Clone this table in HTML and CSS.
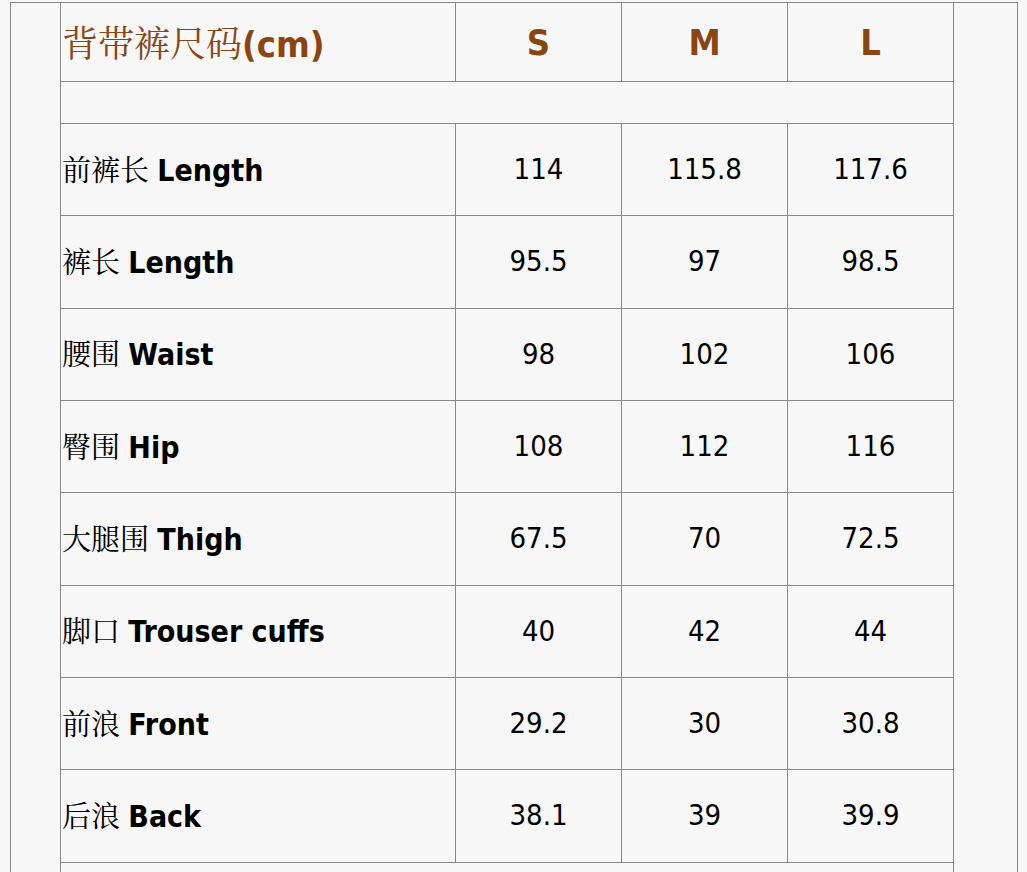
FILE: index.html
```html
<!DOCTYPE html>
<html lang="zh">
<head>
<meta charset="utf-8">
<title>背带裤尺码</title>
<link rel="stylesheet" href="styles.css">
</head>
<body>
<div class="frame">
  <table class="size-table">
    <colgroup>
      <col class="c-label">
      <col class="c-size">
      <col class="c-size">
      <col class="c-size">
    </colgroup>
    <tr class="head">
      <th class="label"><span class="cjk">背带裤尺码</span>(cm)</th>
      <th>S</th>
      <th>M</th>
      <th>L</th>
    </tr>
    <tr class="spacer"><td colspan="4"></td></tr>
    <tr class="row"><td class="label"><span class="cjk">前裤长</span> <b>Length</b></td><td>114</td><td>115.8</td><td>117.6</td></tr>
    <tr class="row"><td class="label"><span class="cjk">裤长</span> <b>Length</b></td><td>95.5</td><td>97</td><td>98.5</td></tr>
    <tr class="row"><td class="label"><span class="cjk">腰围</span> <b>Waist</b></td><td>98</td><td>102</td><td>106</td></tr>
    <tr class="row"><td class="label"><span class="cjk">臀围</span> <b>Hip</b></td><td>108</td><td>112</td><td>116</td></tr>
    <tr class="row"><td class="label"><span class="cjk">大腿围</span> <b>Thigh</b></td><td>67.5</td><td>70</td><td>72.5</td></tr>
    <tr class="row"><td class="label"><span class="cjk">脚口</span> <b>Trouser cuffs</b></td><td>40</td><td>42</td><td>44</td></tr>
    <tr class="row"><td class="label"><span class="cjk">前浪</span> <b>Front</b></td><td>29.2</td><td>30</td><td>30.8</td></tr>
    <tr class="row"><td class="label"><span class="cjk">后浪</span> <b>Back</b></td><td>38.1</td><td>39</td><td>39.9</td></tr>
    <tr class="spacer tail"><td colspan="4"></td></tr>
  </table>
</div>
</body>
</html>
```

FILE: styles.css
```css
html, body {
  margin: 0;
  padding: 0;
  background: #f7f7f7;
}

body {
  font-family: "DejaVu Sans Condensed", "DejaVu Sans", sans-serif;
  font-stretch: condensed;
  color: #000;
  overflow: hidden;
  height: 872px;
}

.frame {
  margin: 2px 0 0 10px;
  width: 1008px;
  box-sizing: border-box;
  border: 1px solid #888;
  border-bottom: none;
  padding: 0 0 0 49px;
  min-height: 900px;
}

.size-table {
  border-collapse: separate;
  border-spacing: 0;
  table-layout: fixed;
  width: 894px;
  border-left: 1px solid #888;
}

.c-label { width: 395px; }
.c-size { width: 166px; }

.size-table th,
.size-table td {
  box-sizing: border-box;
  border-right: 1px solid #888;
  border-bottom: 1px solid #888;
  padding: 0 1px;
  text-align: center;
  vertical-align: middle;
  white-space: nowrap;
  line-height: 1;
}

.size-table .label {
  text-align: left;
}

.cjk {
  font-family: "Noto Serif CJK SC", "AR PL UMing CN", "Noto Sans CJK SC", serif;
  font-weight: 400;
}

.head th {
  height: 79px;
  font-size: 36px;
  font-weight: 700;
  color: #8b4513;
  padding-top: 2px;
}

.spacer td {
  height: 42px;
}

.row td {
  height: 92.34px;
  font-size: 29px;
  font-weight: 400;
}

.row td b {
  font-weight: 700;
  font-size: 30px;
}

.tail td {
  height: 60px;
}
```
